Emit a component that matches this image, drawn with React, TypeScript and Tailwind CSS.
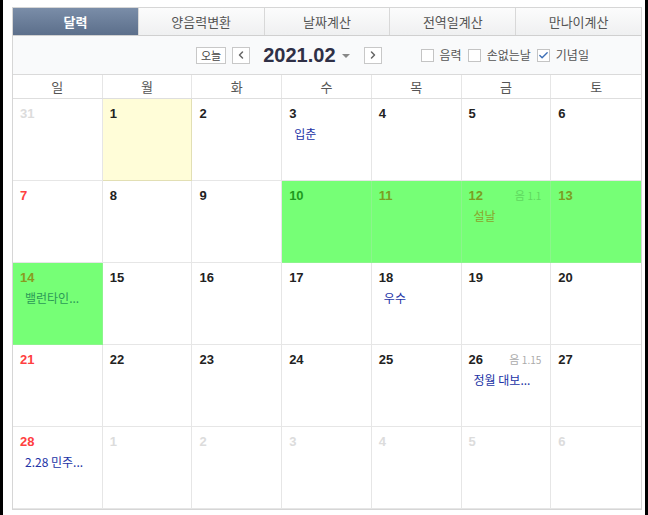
import { ChevronLeft, ChevronRight, Check } from 'lucide-react'

const KR = '"Noto Sans CJK KR", "Noto Sans", sans-serif'
const NUM = '"Liberation Sans", Arial, sans-serif'

type Cell = {
  day: number
  other?: boolean
  sun?: boolean
  today?: boolean
  green?: boolean
  numColor?: string
  lunar?: string
  event?: string
  eventColor?: string
}

const tabs = ['달력', '양음력변환', '날짜계산', '전역일계산', '만나이계산']
const weekdays = ['일', '월', '화', '수', '목', '금', '토']

const cells: Cell[] = [
  { day: 31, other: true },
  { day: 1, today: true },
  { day: 2 },
  { day: 3, event: '입춘' },
  { day: 4 },
  { day: 5 },
  { day: 6 },
  { day: 7, sun: true },
  { day: 8 },
  { day: 9 },
  { day: 10, green: true, numColor: 'text-[#1f9a1f]' },
  { day: 11, green: true, numColor: 'text-[#7c9d22]' },
  { day: 12, green: true, numColor: 'text-[#7c9d22]', lunar: '1.1', event: '설날', eventColor: 'text-[#8aa52c]' },
  { day: 13, green: true, numColor: 'text-[#7c9d22]' },
  { day: 14, green: true, numColor: 'text-[#8a9a20]', event: '밸런타인...', eventColor: 'text-[#2c9a56]' },
  { day: 15 },
  { day: 16 },
  { day: 17 },
  { day: 18, event: '우수' },
  { day: 19 },
  { day: 20 },
  { day: 21, sun: true },
  { day: 22 },
  { day: 23 },
  { day: 24 },
  { day: 25 },
  { day: 26, lunar: '1.15', event: '정월 대보...' },
  { day: 27 },
  { day: 28, sun: true, event: '2.28 민주...' },
  { day: 1, other: true },
  { day: 2, other: true },
  { day: 3, other: true },
  { day: 4, other: true },
  { day: 5, other: true },
  { day: 6, other: true },
]

function Checkbox({ label, checked }: { label: string; checked?: boolean }) {
  return (
    <label className="flex items-center gap-[6px]">
      <span className="flex h-[13px] w-[13px] items-center justify-center border border-[#c4c4c4] bg-white">
        {checked && <Check size={11} strokeWidth={3} className="text-[#3d6fb6]" />}
      </span>
      <span className="text-[12px] text-[#555]">{label}</span>
    </label>
  )
}

function DayCell({ cell, index }: { cell: Cell; index: number }) {
  const lastCol = index % 7 === 6
  let bg = 'bg-white'
  let border = 'border-[#e6e6e6]'
  if (cell.today) {
    bg = 'bg-[#fffdd8]'
    border = 'border-[#e2dfb4]'
  }
  if (cell.green) {
    bg = 'bg-[#76ff76]'
    border = 'border-[#8cf58c]'
  }
  let numColor = 'text-[#222]'
  if (cell.other) numColor = 'text-[#dcdcdc]'
  else if (cell.sun) numColor = 'text-[#ff4040]'
  if (cell.numColor) numColor = cell.numColor

  return (
    <div className={`h-[82px] border-b ${lastCol ? '' : 'border-r'} ${border} ${bg} px-[7px] pt-[5px]`}>
      <div className="flex items-start justify-between">
        <span className={`text-[13px] font-bold ${numColor}`} style={{ fontFamily: NUM }}>
          {cell.day}
        </span>
        {cell.lunar && (
          <span className={`mr-[2px] mt-[1px] text-[11px] ${cell.green ? 'text-[#5fd85f]' : 'text-[#aaa]'}`} style={{ fontFamily: KR }}>
            음 <span className="text-[10px]">{cell.lunar}</span>
          </span>
        )}
      </div>
      {cell.event && (
        <div className={`mt-[1px] pl-[5px] text-[12px] ${cell.eventColor ?? 'text-[#2233a6]'}`} style={{ fontFamily: KR }}>
          {cell.event}
        </div>
      )}
    </div>
  )
}

export default function App() {
  return (
    <div className="h-[515px] w-[648px] border-x-[3px] border-black bg-white pl-[9px] pt-[7px]" style={{ fontFamily: KR }}>
      <div className="w-[630px] border border-[#d6d6d6]">
        <div className="flex h-[28px] border-b border-[#d0d0d0]">
          {tabs.map((t, i) => (
            <div
              key={t}
              className={`flex flex-1 items-center justify-center text-[13px] ${
                i === 0
                  ? 'bg-gradient-to-b from-[#7a8da8] to-[#5c6f8b] font-bold text-white'
                  : 'border-l border-[#d8d8d8] bg-gradient-to-b from-[#fcfcfc] to-[#eff0f1] text-[#555]'
              }`}
            >
              {t}
            </div>
          ))}
        </div>

        <div className="flex h-[39px] items-center border-b border-[#dadada] bg-[#f9fafb] pl-[183px]">
          <button className="flex h-[17px] items-center border border-[#c8c8c8] bg-white px-[4px] text-[11px] text-[#444]">
            오늘
          </button>
          <button className="ml-[6px] flex h-[17px] w-[18px] items-center justify-center border border-[#c8c8c8] bg-white text-[#666]">
            <ChevronLeft size={12} strokeWidth={3} />
          </button>
          <span className="ml-[13px] text-[20px] font-bold text-[#2f3046]" style={{ fontFamily: NUM }}>
            2021.02
          </span>
          <span className="ml-[6px] mt-[2px] h-0 w-0 border-x-[4px] border-t-[4px] border-x-transparent border-t-[#888]" />
          <button className="ml-[14px] flex h-[17px] w-[18px] items-center justify-center border border-[#c8c8c8] bg-white text-[#666]">
            <ChevronRight size={12} strokeWidth={3} />
          </button>
          <div className="ml-[39px] flex items-center gap-[6px]">
            <Checkbox label="음력" />
            <Checkbox label="손없는날" />
            <Checkbox label="기념일" checked />
          </div>
        </div>

        <div className="grid h-[24px] grid-cols-7 border-b border-[#dedede]">
          {weekdays.map((d, i) => (
            <div
              key={d}
              className={`flex items-center justify-center text-[13px] text-[#555] ${i < 6 ? 'border-r border-[#e6e6e6]' : ''}`}
            >
              {d}
            </div>
          ))}
        </div>

        <div className="grid grid-cols-7">
          {cells.map((c, i) => (
            <DayCell key={i} cell={c} index={i} />
          ))}
        </div>
      </div>
    </div>
  )
}
